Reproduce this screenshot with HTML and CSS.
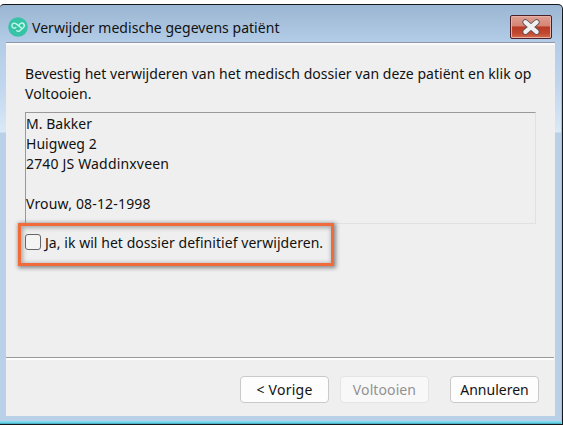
FILE: index.html
```html
<!DOCTYPE html>
<html lang="nl">
<head>
<meta charset="utf-8">
<title>Verwijder medische gegevens patiënt</title>
<link rel="stylesheet" href="styles.css">
</head>
<body>
<div class="window">
  <header class="titlebar">
    <svg class="logo" viewBox="0 0 20 20" width="20" height="20">
      <circle cx="10" cy="10" r="9.8" fill="#36c3a6"/>
      <path d="M11.2 7.8 C12.6 5.7 14.6 5.6 15.8 7 C16.8 8.4 16.2 9.8 15.2 10.7 L11.8 13.8 Q10.2 14.9 8.7 13.7 M13.4 11 L8.2 6.9 C6.2 5.4 4 6.4 3.9 8.6 C3.9 10.8 6 11.8 7.8 10.6" fill="none" stroke="#c4f8e9" stroke-width="1.4" stroke-linecap="round" stroke-linejoin="round"/>
    </svg>
    <h1 class="title">Verwijder medische gegevens patiënt</h1>
    <button class="close" aria-label="Sluiten">
      <svg viewBox="0 0 20 16" width="20" height="16">
        <path d="M4.4 3.2 L15.6 12.8 M15.6 3.2 L4.4 12.8" stroke="#60505a" stroke-width="6" stroke-linecap="round" fill="none"/>
        <path d="M4.4 3.2 L15.6 12.8 M15.6 3.2 L4.4 12.8" stroke="#f0f0f0" stroke-width="4.3" stroke-linecap="round" fill="none"/>
      </svg>
    </button>
  </header>
  <main class="content">
    <section class="body">
      <p class="intro">Bevestig het verwijderen van het medisch dossier van deze patiënt en klik op<br>Voltooien.</p>
      <div class="patient">
        <div>M. Bakker</div>
        <div>Huigweg 2</div>
        <div class="wide">2740 JS Waddinxveen</div>
        <div>&nbsp;</div>
        <div class="wide">Vrouw, 08-12-1998</div>
      </div>
      <label class="confirm"><span class="box"></span><span class="confirm-text">Ja, ik wil het dossier definitief verwijderen.</span></label>
    </section>
    <footer class="actions">
      <button class="btn back">&lt; Vorige</button>
      <button class="btn finish" disabled>Voltooien</button>
      <button class="btn cancel">Annuleren</button>
    </footer>
  </main>
</div>
</body>
</html>
```
FILE: styles.css
```css
* { box-sizing: border-box; }
html { background: #fff; }
body {
  margin: 0;
  padding-top: 4px;
  height: 425px;
  overflow: hidden;
  font-family: "Noto Sans", "Open Sans", sans-serif;
  font-size: 14px;
  line-height: 20px;
  letter-spacing: 0.035px;
  color: #111;
}
.window {
  height: 421px;
  border: solid #16181c;
  border-width: 1px 1px 1px 0;
  border-radius: 4px 5px 0 0;
  padding: 0 7px 0 6px;
  background:
    linear-gradient(#62dff9, #62dff9) right / 1px 100% no-repeat,
    linear-gradient(#8eddf0, #62d0e6 65%, #3a98ae) bottom / 100% 3px no-repeat,
    linear-gradient(#9bb6d2, #b3cce7 37px, #c0d6ee 80px, #d9e9f7 127px, #b9d0e9 128px);
}
.titlebar {
  display: flex;
  align-items: flex-start;
  height: 37px;
  padding-left: 2px;
}
.logo { margin-top: 12px; flex: none; }
.title {
  margin: 13px 0 0 4px;
  font-size: 14px;
  font-weight: 400;
  line-height: 20px;
  white-space: nowrap;
}
.close {
  display: flex;
  align-items: center;
  justify-content: center;
  width: 42px;
  height: 24px;
  margin: 10px 3px 0 auto;
  padding: 0;
  border: 1px solid #49202a;
  border-radius: 2px;
  background: linear-gradient(#dfa093, #d58475 45%, #b83a25 50%, #c34a32 80%, #d36d4e);
  box-shadow: inset 0 0 0 1px #e7b1a5;
}
.content {
  display: flex;
  flex-direction: column;
  height: 374px;
  border-top: 1px solid #9297a6;
  background: #efefef;
  box-shadow: inset 0 2px #fafafa;
}
.body {
  height: 314px;
  padding: 21px 18px 0 19px;
}
.intro { margin: 0; height: 48px; white-space: nowrap; }
.patient {
  width: 511px;
  height: 112px;
  padding-top: 1px;
  border: 1px solid #999;
  border-right-color: #e1e1e1;
  border-bottom-color: #e1e1e1;
  white-space: nowrap;
}
.wide { letter-spacing: 0.17px; }
.confirm {
  position: relative;
  display: flex;
  align-items: center;
  width: 316px;
  height: 43px;
  margin: -1px 0 0 -7px;
  padding: 0 0 5px 4px;
  border: 3px solid #f06a3a;
  background: #efefef;
  box-shadow: 1px 1px 4px 1px #888, inset 1px 1px 4px 1px #aaa;
  letter-spacing: 0.05px;
  white-space: nowrap;
}
.confirm-text { padding-top: 2px; }
.box {
  width: 16px;
  height: 16px;
  border: 1px solid #666;
  border-radius: 3px;
  background: #f4f4f4;
  margin-right: 4px;
}
.actions {
  flex: 1;
  display: flex;
  justify-content: flex-end;
  margin-right: 1px;
  padding: 18px 15px 0 0;
  border-top: 1px solid #999;
  box-shadow: inset 0 2px #fdfdfd;
}
.btn {
  width: 89px;
  height: 27px;
  padding: 0;
  border: 1px solid #c9c9c9;
  border-radius: 4px;
  background: #fdfdfd;
  font: inherit;
  letter-spacing: 0.1px;
  color: #111;
}
.back { letter-spacing: 0.25px; }
.finish { margin-left: 11px; }
.cancel { margin-left: 21px; letter-spacing: 0; }
.btn:disabled { color: #929292; background: #f8f8f8; border-color: #e4e4e4; }
```
